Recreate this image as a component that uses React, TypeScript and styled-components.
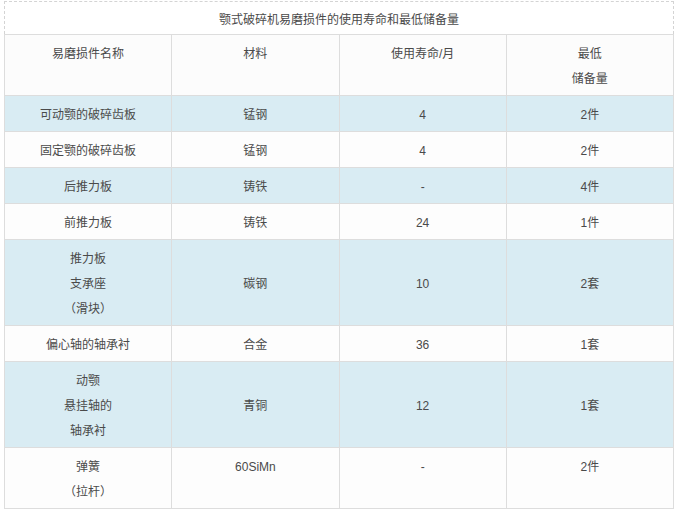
import React from "react";
import styled, { createGlobalStyle } from "styled-components";

const GlobalStyle = createGlobalStyle`
  html, body {
    margin: 0;
    padding: 0;
    background: #ffffff;
  }
  body {
    font-family: "Liberation Sans", "Noto Sans CJK SC", sans-serif;
    color: #4a4a4a;
  }
`;

const Page = styled.div`
  padding: 1px 3px 0 4px;
`;

const Table = styled.table`
  width: 670px;
  border-collapse: collapse;
  table-layout: fixed;
  font-size: 12px;
  line-height: 25px;
`;

const Caption = styled.caption`
  border: 1px dashed #d4d4d4;
  border-bottom: none;
  padding: 6px 0 1px;
  text-align: center;
`;

const HeadCell = styled.th`
  border: 1px solid #dddddd;
  background: #fcfcfc;
  font-weight: normal;
  padding: 7px 8px 3px;
  vertical-align: top;
  text-align: center;
`;

const Row = styled.tr<{ $tinted: boolean }>`
  background: ${(p) => (p.$tinted ? "#d9ecf3" : "#fdfdfd")};
`;

const Cell = styled.td<{ $top?: boolean }>`
  border: 1px solid #dddddd;
  padding: 7px 8px 3px;
  text-align: center;
  vertical-align: ${(p) => (p.$top ? "top" : "middle")};
`;

interface Part {
  name: string[];
  material: string;
  life: string;
  reserve: string;
  top?: boolean;
}

const parts: Part[] = [
  { name: ["可动颚的破碎齿板"], material: "锰钢", life: "4", reserve: "2件" },
  { name: ["固定颚的破碎齿板"], material: "锰钢", life: "4", reserve: "2件" },
  { name: ["后推力板"], material: "铸铁", life: "-", reserve: "4件" },
  { name: ["前推力板"], material: "铸铁", life: "24", reserve: "1件" },
  { name: ["推力板", "支承座", "（滑块）"], material: "碳钢", life: "10", reserve: "2套" },
  { name: ["偏心轴的轴承衬"], material: "合金", life: "36", reserve: "1套" },
  { name: ["动颚", "悬挂轴的", "轴承衬"], material: "青铜", life: "12", reserve: "1套" },
  { name: ["弹簧", "（拉杆）"], material: "60SiMn", life: "-", reserve: "2件", top: true },
];

const Lines: React.FC<{ lines: string[] }> = ({ lines }) => (
  <>
    {lines.map((l, i) => (
      <React.Fragment key={i}>
        {i > 0 && <br />}
        {l}
      </React.Fragment>
    ))}
  </>
);

export default function App() {
  return (
    <Page>
      <GlobalStyle />
      <Table>
        <Caption>颚式破碎机易磨损件的使用寿命和最低储备量</Caption>
        <thead>
          <tr>
            <HeadCell>易磨损件名称</HeadCell>
            <HeadCell>材料</HeadCell>
            <HeadCell>使用寿命/月</HeadCell>
            <HeadCell>
              最低
              <br />
              储备量
            </HeadCell>
          </tr>
        </thead>
        <tbody>
          {parts.map((p, i) => (
            <Row key={i} $tinted={i % 2 === 0}>
              <Cell $top={p.top}>
                <Lines lines={p.name} />
              </Cell>
              <Cell $top={p.top}>{p.material}</Cell>
              <Cell $top={p.top}>{p.life}</Cell>
              <Cell $top={p.top}>{p.reserve}</Cell>
            </Row>
          ))}
        </tbody>
      </Table>
    </Page>
  );
}
